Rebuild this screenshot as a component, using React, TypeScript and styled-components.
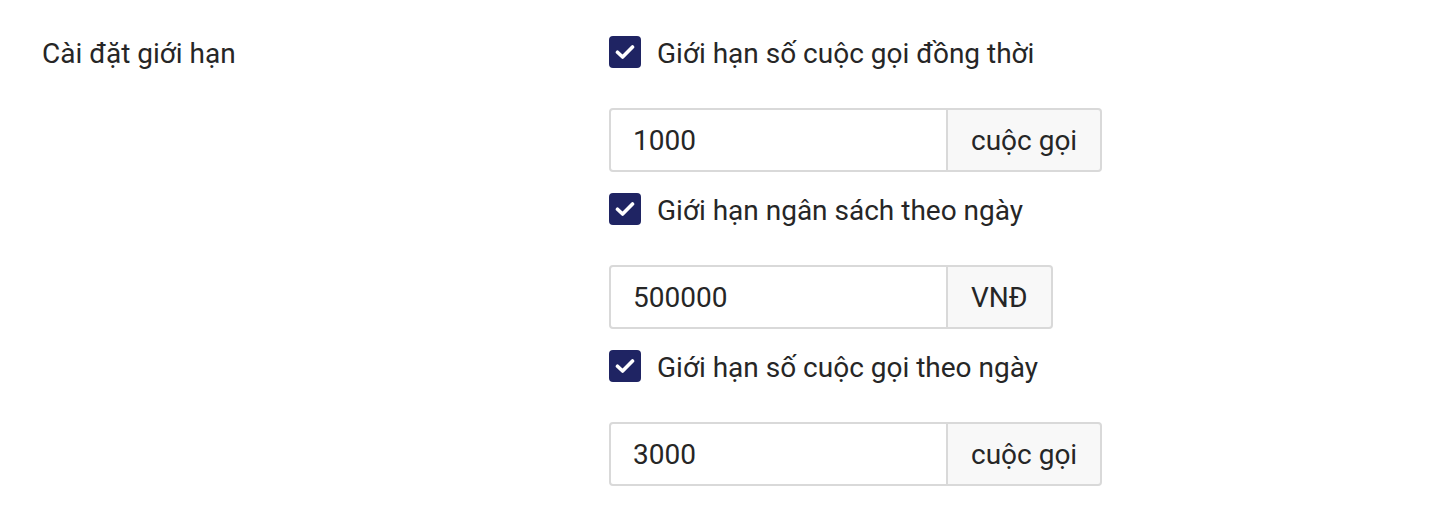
import React from "react";
import styled, { createGlobalStyle } from "styled-components";

const GlobalStyle = createGlobalStyle`
  html, body {
    margin: 0;
    padding: 0;
    background: #ffffff;
  }
  body {
    font-family: Roboto, "Noto Sans", "Liberation Sans", sans-serif;
    color: #262626;
  }
`;

const Page = styled.div`
  display: grid;
  grid-template-columns: 567px 1fr;
  padding: 36px 0 0 42px;
  box-sizing: border-box;
  width: 1442px;
  min-height: 530px;
`;

const Label = styled.div`
  font-size: 28px;
  line-height: 32px;
  height: 32px;
  padding-top: 2px;
  color: #262626;
`;

const Options = styled.div`
  display: flex;
  flex-direction: column;
`;

const Group = styled.div`
  display: flex;
  flex-direction: column;
  margin-bottom: 21px;
`;

const CheckRow = styled.label`
  display: flex;
  align-items: center;
  gap: 16px;
  height: 32px;
  margin-bottom: 40px;
  font-size: 28px;
  color: #262626;
  cursor: pointer;
`;

const CheckText = styled.span`
  padding-top: 2px;
`;

const Box = styled.span`
  width: 32px;
  height: 32px;
  border-radius: 4px;
  background: #1f2463;
  display: flex;
  align-items: center;
  justify-content: center;
  flex-shrink: 0;
`;

const InputGroup = styled.div`
  display: flex;
  height: 64px;
`;

const Field = styled.input`
  width: 339px;
  height: 64px;
  box-sizing: border-box;
  border: 2px solid #d9d9d9;
  border-radius: 4px 0 0 4px;
  padding: 0 22px;
  font-family: Roboto, "Noto Sans", "Liberation Sans", sans-serif;
  font-size: 28px;
  color: #262626;
  background: #ffffff;
  outline: none;
`;

const Addon = styled.span`
  display: flex;
  align-items: center;
  box-sizing: border-box;
  height: 64px;
  padding: 0 23px 0 23px;
  border: 2px solid #d9d9d9;
  border-left: none;
  border-radius: 0 4px 4px 0;
  background: #f8f8f8;
  font-size: 28px;
  color: #262626;
  white-space: nowrap;
`;

const Check = () => (
  <svg width="20" height="16" viewBox="0 0 20 16" fill="none">
    <path
      d="M2.5 8.2 L7.6 13 L17.5 3"
      stroke="#ffffff"
      strokeWidth="3.6"
      strokeLinecap="round"
      strokeLinejoin="round"
    />
  </svg>
);

const items = [
  { label: "Giới hạn số cuộc gọi đồng thời", value: "1000", unit: "cuộc gọi" },
  { label: "Giới hạn ngân sách theo ngày", value: "500000", unit: "VNĐ" },
  { label: "Giới hạn số cuộc gọi theo ngày", value: "3000", unit: "cuộc gọi" },
];

export default function App() {
  return (
    <>
      <GlobalStyle />
      <Page>
        <Label>Cài đặt giới hạn</Label>
        <Options>
          {items.map((it) => (
            <Group key={it.label}>
              <CheckRow>
                <Box>
                  <Check />
                </Box>
                <CheckText>{it.label}</CheckText>
              </CheckRow>
              <InputGroup>
                <Field defaultValue={it.value} />
                <Addon>{it.unit}</Addon>
              </InputGroup>
            </Group>
          ))}
        </Options>
      </Page>
    </>
  );
}
